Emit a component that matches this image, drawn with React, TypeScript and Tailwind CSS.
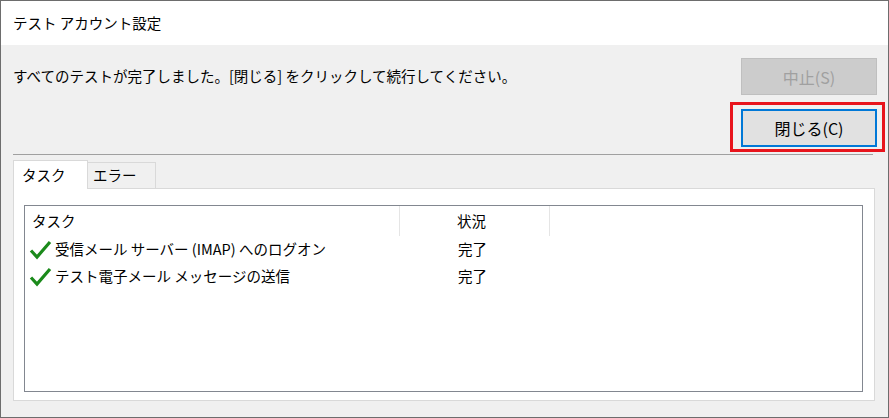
import React from "react";

const Check = () => (
  <svg width="23" height="21" viewBox="0 0 23 21" className="shrink-0">
    <path d="M2 11.5 L8 18 L21 3" fill="none" stroke="#1b8a1b" strokeWidth="3.2" strokeLinecap="butt" strokeLinejoin="miter" />
  </svg>
);

export default function App() {
  const font = "font-['Noto_Sans_CJK_JP','Noto_Sans',sans-serif]";
  return (
    <div className={`w-[889px] h-[418px] border border-[#6d6d6d] bg-[#f0f0f0] flex flex-col text-black text-[14.5px] ${font}`}>
      <div className="h-[44px] bg-white flex items-center pl-[12px] shrink-0">
        <span className="leading-none">テスト アカウント設定</span>
      </div>
      <div className="flex flex-col px-[12px] flex-1">
        <div className="flex items-center justify-between mt-[13px] pr-0">
          <span className="leading-none">すべてのテストが完了しました。[閉じる] をクリックして続行してください。</span>
          <div className="w-[136px] h-[37px] mr-[-1px] bg-[#cccccc] border border-[#bfbfbf] flex items-center justify-center text-[#a0a0a0] text-[16px] leading-none">
            中止(S)
          </div>
        </div>
        <div className="flex justify-end mt-[14px]">
          <div className="relative mr-[-1px]">
            <div className="w-[136px] h-[38px] bg-[#e1e1e1] border-2 border-[#0078d7] flex items-center justify-center text-[16px] leading-none">
              閉じる(C)
            </div>
            <div className="absolute left-[-11px] right-[-8px] top-[-7px] bottom-[-5px] border-[3px] border-[#e8141c] pointer-events-none" />
          </div>
        </div>
        <div className="mt-[7px] w-[860px] border-t border-[#a0a0a0] h-0" />
        <div className="flex items-end mt-[5px] h-[29px] relative z-10">
          <div className="w-[75px] h-[29px] bg-white border border-[#d9d9d9] border-b-0 flex items-center pl-[8px] leading-none">
            タスク
          </div>
          <div className="w-[68px] h-[26px] mb-[1px] bg-[#f0f0f0] border border-[#d9d9d9] border-l-0 border-b-0 flex items-center pl-[5px] leading-none">
            エラー
          </div>
        </div>
        <div className="w-[862px] h-[213px] mt-[-1px] bg-white border border-[#d9d9d9] pl-[10px] pt-[16px]">
          <div className="w-[839px] h-[187px] border border-[#828790] bg-white flex flex-col">
            <div className="flex h-[30px] shrink-0">
              <div className="w-[375px] border-r border-[#e5e5e5] flex items-center pl-[7px] leading-none">タスク</div>
              <div className="w-[150px] border-r border-[#e5e5e5] flex items-center pl-[57px] leading-none">状況</div>
            </div>
            <div className="flex h-[27px] items-center">
              <div className="w-[376px] flex items-center pl-[4px] gap-[3px] leading-none">
                <Check />
                <span>受信メール サーバー (IMAP) へのログオン</span>
              </div>
              <div className="pl-[57px] leading-none">完了</div>
            </div>
            <div className="flex h-[27px] items-center">
              <div className="w-[376px] flex items-center pl-[4px] gap-[3px] leading-none">
                <Check />
                <span>テスト電子メール メッセージの送信</span>
              </div>
              <div className="pl-[57px] leading-none">完了</div>
            </div>
          </div>
        </div>
      </div>
    </div>
  );
}
